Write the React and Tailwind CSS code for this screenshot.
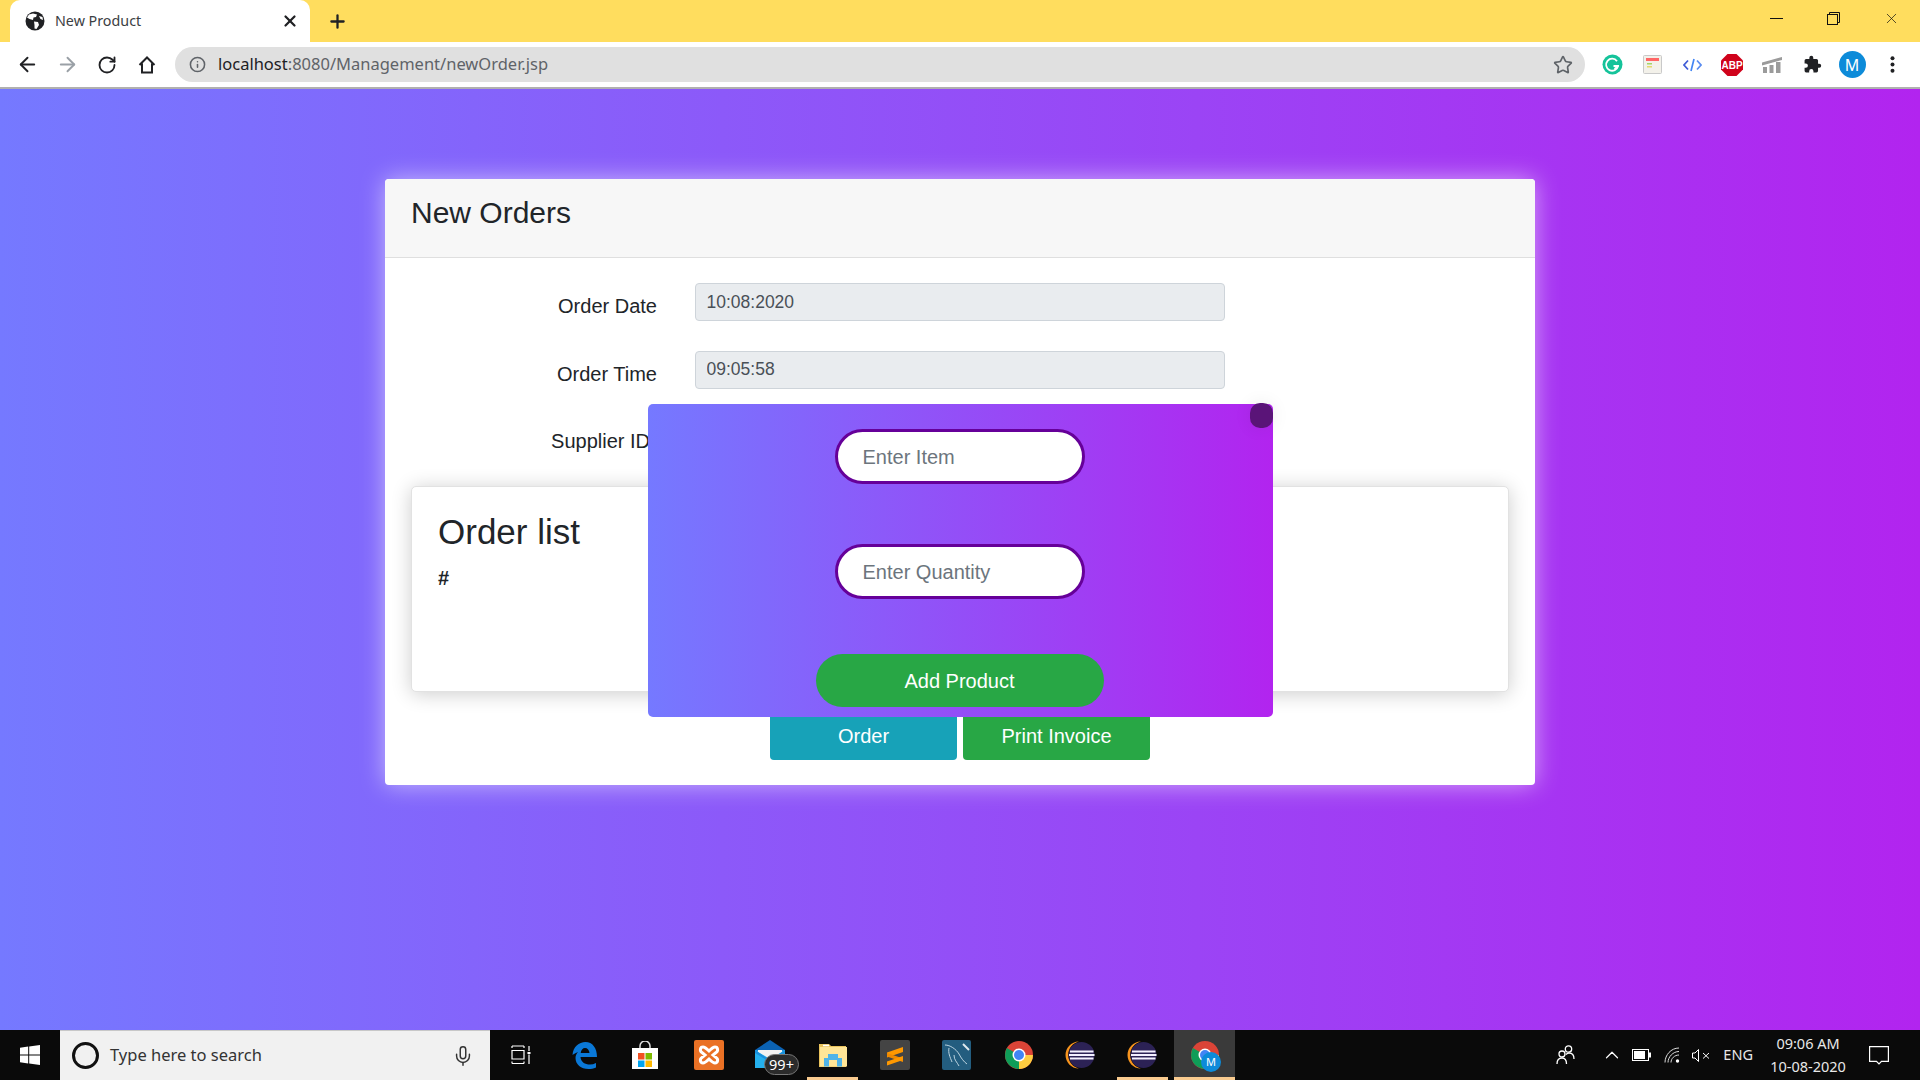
import React from "react";
import { ArrowLeft, ArrowRight, RotateCw, Info, Star, X, Plus, Mic, ChevronUp } from "lucide-react";

const sans = "font-['Liberation_Sans',Arial,sans-serif]";
const ui = "font-['Noto_Sans','Open_Sans',sans-serif]";

function Globe() {
  return (
    <svg width="20" height="20" viewBox="0 0 20 20">
      <circle cx="10" cy="10" r="9.5" fill="#202124" />
      <path d="M4 3.5 8 2.5 12 3.5 11 6 8.5 6.5 8 9 4.5 8 2 6.5ZM9 10.5 13 11 14 14 11.5 18 9.5 17.5 9.5 14ZM14 5 17.5 6 18 9 15.5 8Z" fill="#fff" />
    </svg>
  );
}

function Home() {
  return (
    <svg width="20" height="20" viewBox="0 0 20 20" fill="none" stroke="#202124" strokeWidth="2" strokeLinejoin="miter">
      <path d="M2.5 10 10 2.5 17.5 10M5 8.5V17.5H15V8.5" />
    </svg>
  );
}

function Grammarly() {
  return (
    <svg width="21" height="21" viewBox="0 0 21 21">
      <circle cx="10.5" cy="10.5" r="10" fill="#15c39a" />
      <path d="M15 7.2A6 6 0 1 0 16 12H11.5" fill="none" stroke="#fff" strokeWidth="1.8" />
      <path d="M16.3 12 12.5 15" stroke="#fff" strokeWidth="1.8" />
    </svg>
  );
}

function CalendarExt() {
  return (
    <svg width="19" height="19" viewBox="0 0 19 19">
      <rect x="0.5" y="0.5" width="18" height="18" rx="1" fill="#f3f1ea" stroke="#c9c9c9" />
      <rect x="3" y="3" width="13" height="3" fill="#f66" />
      <rect x="4" y="8" width="5" height="1.5" fill="#a5d56a" />
      <rect x="4" y="11" width="5" height="1.5" fill="#e5d96e" />
    </svg>
  );
}

function CodeExt() {
  return (
    <svg width="19" height="14" viewBox="0 0 19 14" fill="none" strokeWidth="1.7">
      <path d="M5 2.5 1 7 5 11.5" stroke="#3f5bd6" />
      <path d="M11 1 8 13" stroke="#4285f4" />
      <path d="M14 2.5 18 7 14 11.5" stroke="#5a8cf0" />
    </svg>
  );
}

function Abp() {
  return (
    <svg width="22" height="22" viewBox="0 0 22 22">
      <polygon points="6.5,0 15.5,0 22,6.5 22,15.5 15.5,22 6.5,22 0,15.5 0,6.5" fill="#d0021b" />
      <text x="11" y="14.800" textAnchor="middle" fontFamily="Liberation Sans" fontWeight="700" fontSize="10" fill="#fff">ABP</text>
    </svg>
  );
}

function ChartExt() {
  return (
    <svg width="20" height="16" viewBox="0 0 20 16" fill="#9b9b9b">
      <path d="M0 5.5 20 0V3L0 8.5ZM1 10H5V16H1ZM7.5 8H11.5V16H7.5ZM14 5H18.5V16H14Z" />
    </svg>
  );
}

function Puzzle() {
  return (
    <svg width="19" height="19" viewBox="0 0 24 24" fill="#202124">
      <path d="M20.5 11H19V7a2 2 0 0 0-2-2h-4V3.5a2.5 2.5 0 0 0-5 0V5H4a2 2 0 0 0-2 2v3.8h1.5a2.7 2.7 0 0 1 0 5.4H2V20a2 2 0 0 0 2 2h3.8v-1.5a2.7 2.7 0 0 1 5.4 0V22H17a2 2 0 0 0 2-2v-4h1.5a2.5 2.5 0 0 0 0-5z" />
    </svg>
  );
}

function Dots() {
  return (
    <svg width="5" height="17" viewBox="0 0 5 17" fill="#202124">
      <circle cx="2.5" cy="2.2" r="2" />
      <circle cx="2.5" cy="8.5" r="2" />
      <circle cx="2.5" cy="14.8" r="2" />
    </svg>
  );
}

function Restore() {
  return (
    <svg width="13" height="13" viewBox="0 0 13 13" fill="none" stroke="#111" strokeWidth="1">
      <rect x="0.5" y="2.5" width="10" height="10" />
      <path d="M2.5 2.5V0.5H12.5V10.5H10.5" />
    </svg>
  );
}

function WinLogo() {
  return (
    <svg width="20" height="20" viewBox="0 0 20 20" fill="#fff">
      <path d="M0 2.8 8.2 1.6V9.4H0ZM9.2 1.5 20 0V9.4H9.2ZM0 10.5H8.2V18.4L0 17.2ZM9.2 10.5H20V20L9.2 18.5Z" />
    </svg>
  );
}

function TaskView() {
  return (
    <svg width="20" height="20" viewBox="0 0 20 20" fill="none" stroke="#fff" strokeWidth="1.2">
      <path d="M1 1H13M1 5.5H13V14H1ZM1 5.5V14M1 18.5H13M1 1V3M13 1V3M1 16.5V18.5M13 16.5V18.5M18 1V6M18 9.5V19" />
      <rect x="16.5" y="7" width="3" height="2" fill="#fff" stroke="none" />
    </svg>
  );
}

function Edge() {
  return (
    <svg width="25" height="27" viewBox="0 0 25 27">
      <path d="M0.5 13C1 5 7 0 13.5 0 20.5 0 25 6 25 15H8.5C8.8 20 13 22.5 18 22.5 20 22.5 22 22 24 21V25.5C21.5 26.6 19 27 16.5 27 9 27 3.5 22.5 3.5 16 3.5 13.5 4.5 11.5 6 10 3.8 10.8 1.8 12 0.5 13ZM8.7 11H17.5C17.3 8 15.5 6 13 6 10.7 6 9 8 8.7 11Z" fill="#0a78d7" />
    </svg>
  );
}

function Store() {
  return (
    <svg width="26" height="28" viewBox="0 0 26 28">
      <path d="M8 8V5a5 5 0 0 1 10 0V8" fill="none" stroke="#ddd" strokeWidth="1.5" />
      <rect x="0" y="7" width="26" height="21" fill="#fff" />
      <rect x="6" y="12" width="6.5" height="6.5" fill="#f25022" />
      <rect x="13.5" y="12" width="6.5" height="6.5" fill="#7fba00" />
      <rect x="6" y="19.5" width="6.5" height="6.5" fill="#00a4ef" />
      <rect x="13.5" y="19.5" width="6.5" height="6.5" fill="#ffb900" />
    </svg>
  );
}

function Xampp() {
  return (
    <svg width="30" height="30" viewBox="0 0 30 30">
      <rect width="30" height="30" rx="2" fill="#ea7125" />
      <path d="M9 7C6 7 5.500 11 8 12.500L11 15 8 17.500C5.500 19 6 23 9 23 11 23 13 21 15 19 17 21 19 23 21 23 24 23 24.500 19 22 17.500L19 15 22 12.500C24.500 11 24 7 21 7 19 7 17 9 15 11 13 9 11 7 9 7Z" fill="none" stroke="#fff" strokeWidth="3" />
    </svg>
  );
}

function Mail() {
  return (
    <svg width="30" height="28" viewBox="0 0 30 28">
      <path d="M0 10H30V28H0Z" fill="#25b0ee" />
      <path d="M15 0 30 10 15 13 0 10Z" fill="#0b62b3" />
      <path d="M3 10H27L27 12 15 19 3 12Z" fill="#f2f2f2" />
      <path d="M0 10 15 20 30 10V13L15 22 0 13Z" fill="#1a8fdc" />
    </svg>
  );
}

function Folder() {
  return (
    <svg width="28" height="24" viewBox="0 0 28 24">
      <path d="M0 1H10L12 3H27V24H0Z" fill="#eac35c" />
      <rect x="1" y="4" width="27" height="19.500" fill="#ffe597" />
      <path d="M4 2.500H10" stroke="#fff" strokeWidth="1.500" />
      <path d="M5 23.500V15H9V11H19V15H23V23.500H18V17H10V23.500Z" fill="#4fb3e8" />
    </svg>
  );
}

function Sublime() {
  return (
    <svg width="30" height="30" viewBox="0 0 30 30">
      <rect width="30" height="30" rx="2" fill="#444" />
      <path d="M23 7 7 12.500V17.500L23 12Z" fill="#ff9800" />
      <path d="M7 13 23 18.500V22L7 16.500Z" fill="#f08a00" />
      <path d="M23 16 7 21.500V25.500L23 20Z" fill="#ff9800" />
    </svg>
  );
}

function MySql() {
  return (
    <svg width="29" height="30" viewBox="0 0 29 30">
      <rect width="29" height="30" rx="2" fill="#235d7f" />
      <path d="M3 5C8 5 14 9 17 14 19 18 22 22 25 24M7 8C6 13 8 17 10 22M12 15C12 20 15 22 17 26" fill="none" stroke="#bcd4e0" strokeWidth="1" />
      <path d="M21 4 27 10" stroke="#dfe9ee" strokeWidth="2" />
    </svg>
  );
}

function Chrome({ size = 28 }) {
  return (
    <svg width={size} height={size} viewBox="0 0 28 28">
      <circle cx="14" cy="14" r="14" fill="#db4437" />
      <path d="M14 14 1.900 7A14 14 0 0 0 14 28L21 14Z" fill="#0f9d58" />
      <path d="M14 14H28A14 14 0 0 1 14 28Z" fill="#ffcd40" />
      <circle cx="14" cy="14" r="6.500" fill="#fff" />
      <circle cx="14" cy="14" r="5" fill="#4285f4" />
    </svg>
  );
}

function Eclipse() {
  return (
    <svg width="30" height="28" viewBox="0 0 30 28">
      <path d="M14 0.500C6 0.500 0.500 7 0.500 14 0.500 21 6 27.500 14 27.500 8 26 3.200 21 3.200 14 3.200 7 8 2 14 0.500Z" fill="#f7941e" />
      <circle cx="16.500" cy="14" r="13" fill="#2c2255" />
      <path d="M5 10.500H28.500M4 14H29.500M5 17.500H28.500" stroke="#f4f1ff" strokeWidth="1.800" />
    </svg>
  );
}

function People() {
  return (
    <svg width="19" height="20" viewBox="0 0 19 20" fill="none" stroke="#fff" strokeWidth="1.300">
      <circle cx="12.500" cy="4" r="3.200" />
      <circle cx="6" cy="9" r="3" />
      <path d="M1 19C1 15 3 13 6 13 9 13 10.500 15 10.500 19M10 9.500C11 8.500 12 8 13 8 15.800 8 18 10 18 14" />
    </svg>
  );
}

function Battery() {
  return (
    <svg width="19" height="12" viewBox="0 0 19 12">
      <rect x="0.500" y="0.500" width="16" height="11" fill="none" stroke="#fff" />
      <rect x="2" y="2" width="11" height="8" fill="#fff" />
      <rect x="17" y="3.500" width="2" height="5" fill="#fff" />
    </svg>
  );
}

function Wifi() {
  return (
    <svg width="17" height="16" viewBox="0 0 17 16" fill="none" stroke="#ddd" strokeWidth="1">
      <path d="M1 15.500C1 8 7 1 15 1M4 15.500C4 10 9 4.500 15 4.500M7 15.500C7 11.500 10.500 8 15 8" />
      <circle cx="13.500" cy="14" r="1.700" fill="#fff" stroke="none" />
    </svg>
  );
}

function Volume() {
  return (
    <svg width="19" height="13" viewBox="0 0 19 13" fill="none" stroke="#fff" strokeWidth="1">
      <path d="M0.500 4H3L6.500 0.500V12.500L3 9H0.500ZM11 4 17 9.500M17 4 11 9.500" />
    </svg>
  );
}

function Notify() {
  return (
    <svg width="20" height="19" viewBox="0 0 20 19" fill="none" stroke="#fff" strokeWidth="1.200">
      <path d="M0.600 0.600H19.400V15.400H12.500L10 18 7.500 15.400H0.600Z" />
    </svg>
  );
}

function ExtSlot({ children }) {
  return <div className="flex h-full w-[40px] items-center justify-center">{children}</div>;
}

function TaskItem({ children, underline, active }) {
  return (
    <div className="flex h-[50px] w-[62px] items-center justify-center">
      <div className={`relative flex h-full items-center justify-center ${active ? "w-[61px] bg-[#3a3a3a]" : "w-[51px]"}`}>
        {children}
        {underline && <div className="absolute bottom-0 left-0 right-0 h-[3px] bg-[#f9cb8f]" />}
      </div>
    </div>
  );
}

function FormRow({ label, value, extra }) {
  return (
    <div className="mb-[29.500px] flex items-start">
      <label className={`w-[246px] pt-[8px] text-right text-[20px] leading-[30px] text-[#212529] ${extra || ""}`}>{label}</label>
      <input
        readOnly
        value={value}
        className="ml-[37.500px] h-[38px] w-[530px] rounded-[4px] border border-[#ced4da] bg-[#e9ecef] px-[11px] text-[17.500px] text-[#495057] outline-none"
      />
    </div>
  );
}

export default function App() {
  return (
    <div className={`flex h-screen w-full flex-col overflow-hidden ${sans}`}>
      {/* tab strip */}
      <div className={`flex h-[42px] shrink-0 items-end bg-[#ffdd5e] ${ui}`}>
        <div className="ml-[10px] flex h-[42px] w-[300px] items-center rounded-t-[10px] bg-white pl-[15px] pr-[11px]">
          <Globe />
          <span className="ml-[10px] flex-1 text-[14.300px] text-[#3c4043]">New Product</span>
          <X size={18} strokeWidth={3} color="#202124" />
        </div>
        <div className="ml-[17px] flex h-[42px] items-center">
          <Plus size={21} strokeWidth={2.600} color="#202124" />
        </div>
        <div className="flex-1" />
        <div className="flex h-[42px] items-center pb-[6px]">
          <div className="h-px w-[13px] bg-[#111]" />
          <div className="ml-[44px]"><Restore /></div>
          <div className="ml-[43px] mr-[20px]"><X size={17} strokeWidth={1} color="#111" /></div>
        </div>
      </div>

      {/* toolbar */}
      <div className={`flex h-[47px] shrink-0 items-center border-b-2 border-[#b0b0b0] bg-white ${ui}`}>
        <div className="flex w-[175px] items-center pl-[16px]">
          <ArrowLeft size={23} strokeWidth={2} color="#202124" />
          <div className="ml-[17px]"><ArrowRight size={23} strokeWidth={2} color="#9aa0a6" /></div>
          <div className="ml-[18px]"><RotateCw size={20} strokeWidth={2.200} color="#202124" /></div>
          <div className="ml-[20px]"><Home /></div>
        </div>
        <div className="flex h-[35px] w-[1410px] items-center rounded-full bg-[#e0e0e0] pl-[14px] pr-[12px]">
          <Info size={17} strokeWidth={2.200} color="#5f6368" />
          <span className="ml-[12px] flex-1 text-[16.500px] text-[#5f6368]">
            <span className="text-[#202124]">localhost</span>:8080/Management/newOrder.jsp
          </span>
          <Star size={20} strokeWidth={2} color="#5f6368" />
        </div>
        <div className="ml-[7px] flex h-full items-center">
          <ExtSlot><Grammarly /></ExtSlot>
          <ExtSlot><CalendarExt /></ExtSlot>
          <ExtSlot><CodeExt /></ExtSlot>
          <ExtSlot><Abp /></ExtSlot>
          <ExtSlot><ChartExt /></ExtSlot>
          <ExtSlot><Puzzle /></ExtSlot>
          <ExtSlot>
            <div className="flex h-[27px] w-[27px] items-center justify-center rounded-full bg-[#0d8bd9] text-[16px] text-white">M</div>
          </ExtSlot>
          <ExtSlot><Dots /></ExtSlot>
        </div>
      </div>

      {/* page */}
      <div className="relative flex-1 bg-[linear-gradient(to_right,#7579ff,#b224ef)] pt-[90px]">
        <div className="mx-auto w-[1150px] rounded-[4px] bg-white shadow-[0_0_24px_rgba(255,255,255,0.55)]">
          <div className="flex h-[79px] items-center rounded-t-[4px] border-b border-[#dfdfdf] bg-[#f7f7f7] pb-[12px] pl-[26px] text-[30px] text-[#212529]">
            New Orders
          </div>
          <div className="px-[26px] pb-[25px] pt-[25px]">
            <FormRow label="Order Date" value="10:08:2020" />
            <FormRow label="Order Time" value="09:05:58" />
            <FormRow label="Supplier ID" value="" extra="pr-[7px]" />
            <div className="h-[206px] rounded-[5px] border border-[#e2e2e2] bg-white px-[26px] pt-[24px] text-[#212529] shadow-[0_2px_20px_rgba(0,0,0,0.2)]">
              <div className="text-[35px] leading-[42px]">Order list</div>
              <div className="mt-[10px] text-[20px] font-bold leading-[30px]">#</div>
            </div>
            <div className="mt-[21px] flex justify-center gap-[6px]">
              <button className="h-[47.500px] w-[187px] rounded-[4px] bg-[#17a2b8] text-[20px] text-white">Order</button>
              <button className="h-[47.500px] w-[187px] rounded-[4px] bg-[#28a745] text-[20px] text-white">Print Invoice</button>
            </div>
          </div>
        </div>

        {/* popup */}
        <div className="absolute left-[648px] top-[315px] flex h-[313px] w-[625px] flex-col items-center rounded-[5px] bg-[linear-gradient(to_right,#7579ff,#b224ef)] pr-[2px] pt-[25px]">
          <div className="absolute right-0 top-[-1px] h-[25px] w-[23px] rounded-[10px] bg-[#5a1478] shadow-[0_0_18px_rgba(0,0,0,0.08)]" />
          <input
            placeholder="Enter Item"
            className="h-[55px] w-[250px] rounded-full border-[3px] border-[#660099] bg-white pl-[25px] pr-[24px] pt-[2px] text-[20px] text-[#495057] outline-none placeholder:text-[#6c757d]"
          />
          <input
            placeholder="Enter Quantity"
            className="mt-[60px] h-[55px] w-[250px] rounded-full border-[3px] border-[#660099] bg-white pl-[25px] pr-[24px] pt-[2px] text-[20px] text-[#495057] outline-none placeholder:text-[#6c757d]"
          />
          <button className="mt-[55px] h-[53px] w-[288px] rounded-full bg-[#28a745] text-[20px] text-white">Add Product</button>
        </div>
      </div>

      {/* taskbar */}
      <div className={`flex h-[50px] shrink-0 items-center bg-[#0a0a0a] ${ui}`}>
        <div className="flex h-full w-[60px] items-center justify-center"><WinLogo /></div>
        <div className="flex h-full w-[430px] items-center border-t border-[#c8c8c8] bg-[#f1f1f1] pl-[12px] pr-[16px]">
          <div className="h-[27px] w-[27px] rounded-full border-[3px] border-[#111]" />
          <span className="ml-[11px] flex-1 text-[16.500px] text-[#333]">Type here to search</span>
          <Mic size={22} strokeWidth={1.600} color="#333" />
        </div>
        <div className="flex h-full w-[61px] items-center justify-center"><TaskView /></div>
        <div className="ml-[2.500px] flex">
          <TaskItem><Edge /></TaskItem>
          <TaskItem><div className="-ml-[3px]"><Store /></div></TaskItem>
          <TaskItem><Xampp /></TaskItem>
          <TaskItem>
            <div className="-ml-[2px] -mt-[2px]"><Mail /></div>
            <div className="absolute left-[-1px] top-[24px] flex h-[21px] w-[35px] translate-x-[20px] items-center justify-center rounded-full border border-[#777] bg-[#2b2b2b] text-[14.500px] leading-none text-white">99+</div>
          </TaskItem>
          <TaskItem underline><Folder /></TaskItem>
          <TaskItem><Sublime /></TaskItem>
          <TaskItem><MySql /></TaskItem>
          <TaskItem><Chrome /></TaskItem>
          <TaskItem><div className="-ml-[2px]"><Eclipse /></div></TaskItem>
          <TaskItem underline><div className="-ml-[2px]"><Eclipse /></div></TaskItem>
          <TaskItem underline active>
            <Chrome />
            <div className="absolute left-[27px] top-[22px] flex h-[20px] w-[20px] items-center justify-center rounded-full bg-[#0d8bd9] text-[11px] text-white">M</div>
          </TaskItem>
        </div>
        <div className="flex-1" />
        <div className="flex h-full items-center text-[#e8e8e8]">
          <People />
          <div className="ml-[26px]"><ChevronUp size={22} strokeWidth={1.300} color="#fff" /></div>
          <div className="ml-[9px]"><Battery /></div>
          <div className="ml-[13px]"><Wifi /></div>
          <div className="ml-[11px]"><Volume /></div>
          <span className="ml-[12px] text-[14.500px]">ENG</span>
          <div className="ml-[17px] flex w-[76px] flex-col items-center text-[14.500px] leading-[23px]">
            <span className="whitespace-nowrap">09:06 AM</span>
            <span className="whitespace-nowrap">10-08-2020</span>
          </div>
          <div className="ml-[23px] mr-[31px]"><Notify /></div>
        </div>
      </div>
    </div>
  );
}
